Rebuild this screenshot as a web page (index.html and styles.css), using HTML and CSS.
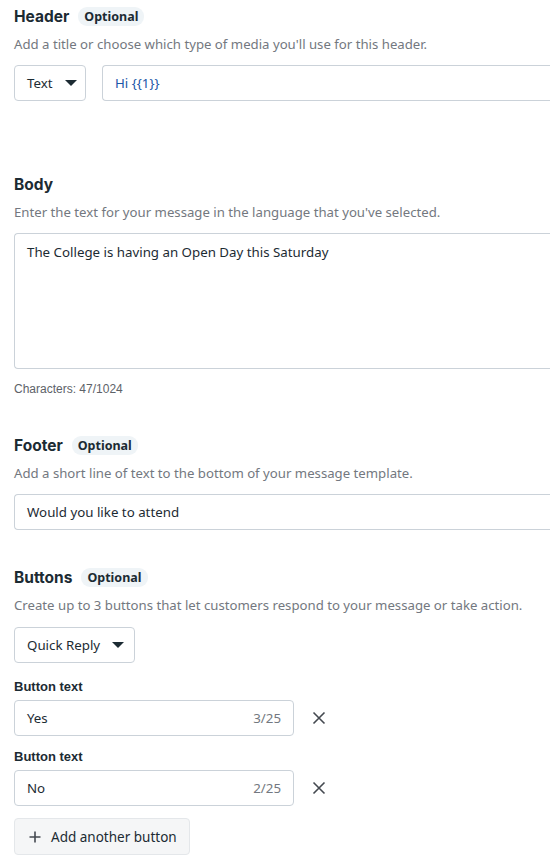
FILE: index.html
```html
<!DOCTYPE html>
<html>
<head>
<meta charset="utf-8">
<link rel="stylesheet" href="styles.css">
</head>
<body>
<div class="page">
  <section class="sec sec-header">
    <div class="title"><span class="title-text">Header</span><span class="badge">Optional</span></div>
    <div class="desc">Add a title or choose which type of media you'll use for this header.</div>
    <div class="row">
      <div class="select sel-text"><span>Text</span><span class="caret"></span></div>
      <div class="input grow open-right"><span class="blue">Hi {{1}}</span></div>
    </div>
  </section>

  <section class="sec sec-body">
    <div class="title"><span class="title-text">Body</span></div>
    <div class="desc">Enter the text for your message in the language that you've selected.</div>
    <div class="textarea open-right">The College is having an Open Day this Saturday</div>
    <div class="count">Characters: 47/1024</div>
  </section>

  <section class="sec sec-footer">
    <div class="title"><span class="title-text">Footer</span><span class="badge">Optional</span></div>
    <div class="desc">Add a short line of text to the bottom of your message template.</div>
    <div class="input full open-right">Would you like to attend</div>
  </section>

  <section class="sec sec-buttons">
    <div class="title"><span class="title-text">Buttons</span><span class="badge">Optional</span></div>
    <div class="desc">Create up to 3 buttons that let customers respond to your message or take action.</div>
    <div class="select sel-qr"><span>Quick Reply</span><span class="caret"></span></div>

    <div class="label first">Button text</div>
    <div class="btn-row">
      <div class="input btn-input"><span>Yes</span><span class="cnt">3/25</span></div>
      <svg class="x" width="14" height="14" viewBox="0 0 14 14"><path d="M1.5 1.5 L12.5 12.5 M12.5 1.5 L1.5 12.5" stroke="#444950" stroke-width="1.6" fill="none"/></svg>
    </div>
    <div class="label">Button text</div>
    <div class="btn-row">
      <div class="input btn-input"><span>No</span><span class="cnt">2/25</span></div>
      <svg class="x" width="14" height="14" viewBox="0 0 14 14"><path d="M1.5 1.5 L12.5 12.5 M12.5 1.5 L1.5 12.5" stroke="#444950" stroke-width="1.6" fill="none"/></svg>
    </div>
    <div class="add-btn">
      <svg width="12" height="12" viewBox="0 0 12 12"><path d="M6 0.5 V11.5 M0.5 6 H11.5" stroke="#444950" stroke-width="1.6" fill="none"/></svg>
      <span>Add another button</span>
    </div>
  </section>
</div>
</body>
</html>
```

FILE: styles.css
```css
html, body {
  margin: 0;
  padding: 0;
  background: #ffffff;
  overflow: hidden;
}
body {
  width: 550px;
  height: 864px;
  font-family: "Noto Sans", "Open Sans", sans-serif;
  color: #1c2b33;
}
.page {
  width: 550px;
  padding: 6px 0 0 14px;
  box-sizing: border-box;
}
.sec { display: flex; flex-direction: column; align-items: flex-start; }
.title {
  display: flex;
  align-items: center;
  height: 20px;
  white-space: nowrap;
}
.title-text {
  font-family: "Inter", "Noto Sans", sans-serif;
  font-weight: 700;
  font-size: 15.5px;
  color: #1c2b33;
}
.badge {
  margin-left: 9px;
  background: #eff4f7;
  border-radius: 9px;
  font-size: 12.5px;
  font-weight: 700;
  font-family: "Noto Sans", sans-serif;
  padding: 0 6px;
  height: 19px;
  line-height: 19px;
  color: #1c2b33;
}
.desc {
  margin-top: 8px;
  font-size: 13.2px;
  line-height: 20px;
  color: #737880;
  white-space: nowrap;
}
.row {
  display: flex;
  gap: 16px;
  margin-top: 11px;
  width: 536px;
}
.select, .input, .textarea {
  box-sizing: border-box;
  border: 1px solid #cbd2d9;
  border-radius: 4px;
  font-size: 13.3px;
  color: #1c2b33;
  background: #fff;
  white-space: nowrap;
  flex-shrink: 0;
}
.open-right {
  border-right: none;
  border-top-right-radius: 0;
  border-bottom-right-radius: 0;
}
.select {
  height: 36px;
  display: flex;
  align-items: center;
  padding: 0 12px;
  gap: 12px;
}
.sel-text { width: 72px; }
.caret {
  width: 0; height: 0;
  border-left: 6px solid transparent;
  border-right: 6px solid transparent;
  border-top: 6px solid #1c2b33;
  flex-shrink: 0;
}
.input {
  height: 36px;
  display: flex;
  align-items: center;
  padding: 0 12px;
}
.grow { flex: 1; }
.blue { color: #1a56a8; }
.textarea {
  margin-top: 11px;
  width: 536px;
  height: 136px;
  padding: 8px 12px;
  line-height: 20px;
}
.count {
  margin-top: 12px;
  font-family: "Liberation Sans", Arial, sans-serif;
  font-size: 12px;
  line-height: 16px;
  color: #5d6268;
}
.sec-body { margin-top: 73px; }
.sec-footer { margin-top: 38px; }
.sec-buttons { margin-top: 37px; }
.full { margin-top: 11px; width: 536px; }
.sel-qr { margin-top: 12px; width: 121px; }
.label {
  margin-top: 12px;
  font-family: "Liberation Sans", Arial, sans-serif;
  font-weight: 700;
  font-size: 13px;
  line-height: 18px;
  color: #1c2b33;
}
.label.first { margin-top: 15px; }
.btn-row {
  margin-top: 4px;
  display: flex;
  align-items: center;
  gap: 18px;
}
.btn-input {
  width: 280px;
  justify-content: space-between;
}
.cnt { color: #737880; }
.x { display: block; }
.add-btn {
  margin-top: 12px;
  box-sizing: border-box;
  height: 37px;
  width: 176px;
  border: 1px solid #e4e7ea;
  background: #f5f6f7;
  border-radius: 4px;
  display: flex;
  align-items: center;
  padding: 0 14px;
  gap: 10px;
  font-size: 13.5px;
  color: #1c2b33;
  white-space: nowrap;
}
.add-btn svg { display: block; flex-shrink: 0; }
```
